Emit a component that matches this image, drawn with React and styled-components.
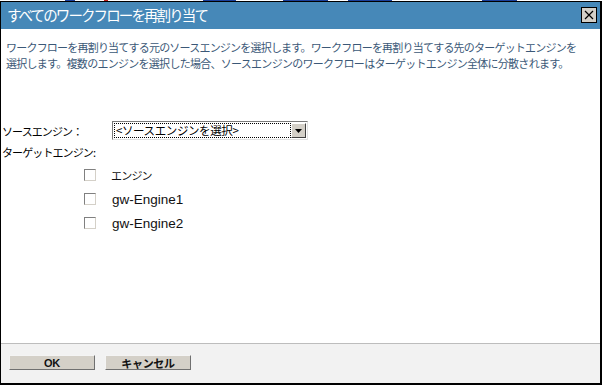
import React from 'react';
import styled, { createGlobalStyle } from 'styled-components';

const GlobalStyle = createGlobalStyle`
  html, body {
    margin: 0;
    padding: 0;
    background: #ffffff;
  }
  body {
    font-family: "Noto Sans CJK JP", "Liberation Sans", sans-serif;
  }
`;

const Page = styled.div`
  width: 602px;
  height: 385px;
  display: flex;
  flex-direction: column;
  box-sizing: border-box;
`;

const BackStrip = styled.div`
  height: 1px;
  flex: none;
  background: linear-gradient(
    to right,
    transparent 65px, #1b3f9a 65px, #1b3f9a 75px, transparent 75px,
    transparent 104px, #c02020 104px, #c02020 108px, transparent 108px,
    transparent 203px, #1b3f9a 203px, #1b3f9a 236px, transparent 236px,
    transparent 283px, #1b3f9a 283px, #1b3f9a 328px, transparent 328px,
    transparent 348px, #1b3f9a 348px, #1b3f9a 392px, transparent 392px,
    transparent 482px, #1b3f9a 482px, #1b3f9a 517px, transparent 517px
  );
`;

const Dialog = styled.div`
  flex: 1;
  display: flex;
  flex-direction: column;
  border-style: solid;
  border-color: #000;
  border-width: 1px 2px 2px 1px;
  min-height: 0;
`;

const TitleBar = styled.div`
  height: 26px;
  background: #4688b8;
  display: flex;
  align-items: center;
  justify-content: space-between;
  padding: 0 2px 0 6px;
  border-bottom: 1px solid #4688b8;
`;

const Title = styled.span`
  color: #fff;
  font-size: 14.5px;
  letter-spacing: -1.9px;
  line-height: 1;
  padding-top: 1px;
`;

const CloseButton = styled.div`
  width: 14px;
  height: 14px;
  background: #d4d0c8;
  border: 1px solid #000;
  display: flex;
  align-items: center;
  justify-content: center;
  margin-right: 1px;
`;

const Body = styled.div`
  flex: 1;
  background: #fff;
  padding: 10px 0 0 0;
`;

const Description = styled.div`
  margin: 0 0 0 5px;
  color: #3b5877;
  font-size: 11px;
  line-height: 16px;
  white-space: nowrap;
`;

const DescLine = styled.div`
  letter-spacing: ${(p) => p.$spacing};
`;

const FormGrid = styled.div`
  margin-top: 50px;
  display: grid;
  grid-template-columns: 110px auto;
  align-items: center;
  row-gap: 3px;
  padding-left: 1px;
`;

const Label = styled.span`
  font-size: 11px;
  letter-spacing: -0.9px;
  color: #000;
  line-height: 18px;
`;

const Select = styled.div`
  width: 196px;
  height: 19px;
  box-sizing: border-box;
  border-style: solid;
  border-width: 1px;
  border-color: #7a7a7a #e0e0e0 #e0e0e0 #7a7a7a;
  background: #fff;
  display: flex;
  padding: 1px;
`;

const SelectValue = styled.div`
  flex: 1;
  border: 1px dotted #000;
  font-size: 11.5px;
  letter-spacing: -0.4px;
  line-height: 13px;
  padding-left: 1px;
  color: #000;
`;

const SelectArrow = styled.div`
  width: 15px;
  background: #d4d0c8;
  border-style: solid;
  border-width: 1px;
  border-color: #fff #404040 #404040 #fff;
  box-sizing: border-box;
  display: flex;
  align-items: center;
  justify-content: center;
`;

const CheckList = styled.div`
  display: flex;
  flex-direction: column;
  gap: 10px;
  padding: 7px 0 0 83px;
`;

const CheckRow = styled.label`
  display: flex;
  align-items: center;
  height: 14px;
`;

const Box = styled.span`
  width: 12px;
  height: 12px;
  box-sizing: border-box;
  border-style: solid;
  border-width: 1px;
  border-color: #808080 #d4d0c8 #d4d0c8 #808080;
  background: #fff;
  margin-right: 15px;
  flex: none;
`;

const CheckText = styled.span`
  font-family: ${(p) => (p.$latin ? '"Liberation Sans", sans-serif' : '"Noto Sans CJK JP", sans-serif')};
  font-size: ${(p) => (p.$latin ? '13.5px' : '11px')};
  letter-spacing: ${(p) => (p.$latin ? '0' : '-0.8px')};
  color: #111;
  padding-left: ${(p) => (p.$latin ? '1px' : '0')};
`;

const Footer = styled.div`
  height: 37px;
  flex: none;
  background: #f2f2f2;
  border-top: 1px solid #bdbdbd;
  display: flex;
  align-items: center;
  gap: 10px;
  padding: 0 0 2px 8px;
`;

const Button = styled.div`
  width: 86px;
  height: 15px;
  box-sizing: border-box;
  background: #d4d0c8;
  border-style: solid;
  border-width: 1px;
  border-color: #f4f4f4 #707070 #707070 #f4f4f4;
  display: flex;
  align-items: center;
  justify-content: center;
  font-family: "Liberation Sans", "Noto Sans CJK JP", sans-serif;
  font-weight: bold;
  font-size: 11px;
  color: #111;
  letter-spacing: -0.3px;
`;

const engines = [
  { name: 'エンジン', latin: false },
  { name: 'gw-Engine1', latin: true },
  { name: 'gw-Engine2', latin: true },
];

export default function App() {
  return (
    <>
      <GlobalStyle />
      <Page>
        <BackStrip />
        <Dialog>
          <TitleBar>
            <Title>すべてのワークフローを再割り当て</Title>
            <CloseButton>
              <svg width="10" height="10" viewBox="0 0 10 10">
                <path d="M1 1 L9 9 M9 1 L1 9" stroke="#000" strokeWidth="1.2" />
              </svg>
            </CloseButton>
          </TitleBar>
          <Body>
            <Description>
              <DescLine $spacing="-0.79px">
                ワークフローを再割り当てする元のソースエンジンを選択します。ワークフローを再割り当てする先のターゲットエンジンを
              </DescLine>
              <DescLine $spacing="-0.72px">
                選択します。複数のエンジンを選択した場合、ソースエンジンのワークフローはターゲットエンジン全体に分散されます。
              </DescLine>
            </Description>
            <FormGrid>
              <Label>ソースエンジン：</Label>
              <Select>
                <SelectValue>&lt;ソースエンジンを選択&gt;</SelectValue>
                <SelectArrow>
                  <svg width="7" height="4" viewBox="0 0 7 4">
                    <path d="M0 0 L7 0 L3.5 4 Z" fill="#000" />
                  </svg>
                </SelectArrow>
              </Select>
              <Label>ターゲットエンジン:</Label>
              <span />
            </FormGrid>
            <CheckList>
              {engines.map((e) => (
                <CheckRow key={e.name}>
                  <Box />
                  <CheckText $latin={e.latin}>{e.name}</CheckText>
                </CheckRow>
              ))}
            </CheckList>
          </Body>
          <Footer>
            <Button>OK</Button>
            <Button>キャンセル</Button>
          </Footer>
        </Dialog>
      </Page>
    </>
  );
}
